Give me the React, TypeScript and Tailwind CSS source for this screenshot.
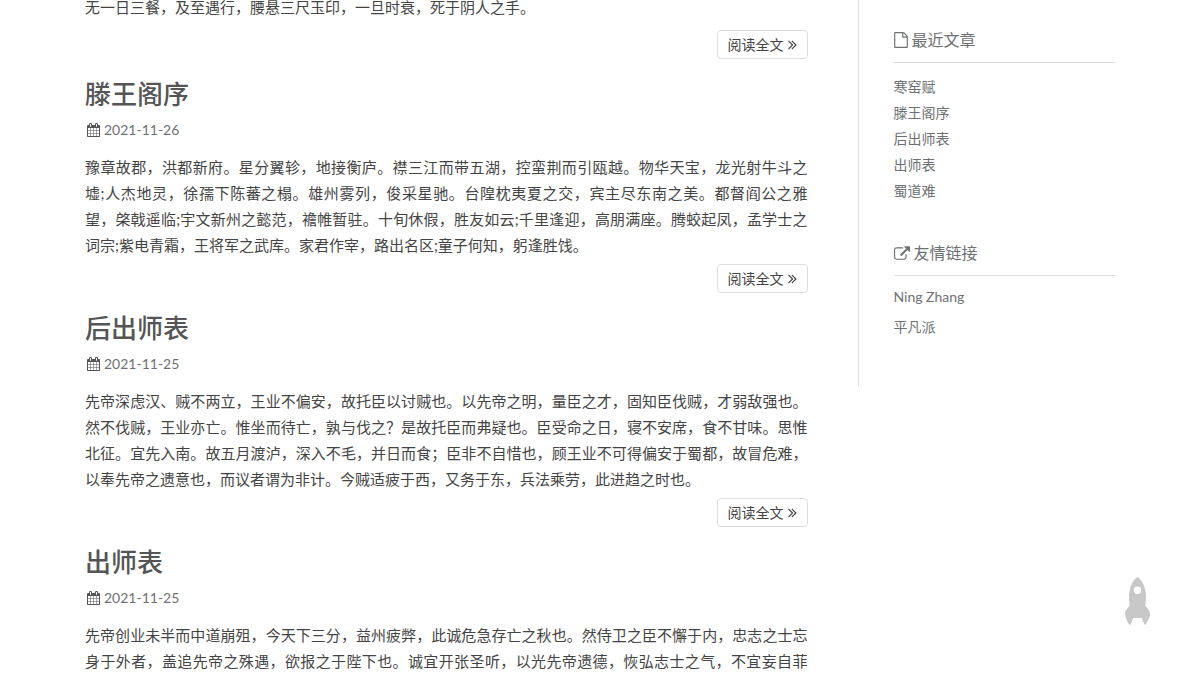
import React from "react";

const CALENDAR =
  "M192 1664h288v-288h-288v288zm352 0h320v-288h-320v288zm-352-352h288v-320h-288v320zm352 0h320v-320h-320v320zm-352-384h288v-288h-288v288zm736 736h320v-288h-320v288zm-384-736h320v-288h-320v288zm768 736h288v-288h-288v288zm-384-352h320v-320h-320v320zm-352-864v-288q0-13-9.5-22.5t-22.5-9.5h-64q-13 0-22.5 9.5t-9.5 22.5v288q0 13 9.5 22.5t22.5 9.5h64q13 0 22.5-9.5t9.5-22.5zm736 864h288v-320h-288v320zm-384-384h320v-288h-320v288zm384 0h288v-288h-288v288zm32-480v-288q0-13-9.5-22.5t-22.5-9.5h-64q-13 0-22.5 9.5t-9.5 22.5v288q0 13 9.5 22.5t22.5 9.5h64q13 0 22.5-9.5t9.5-22.5zm384-64v1280q0 52-38 90t-90 38h-1408q-52 0-90-38t-38-90v-1280q0-52 38-90t90-38h128v-96q0-66 47-113t113-47h64q66 0 113 47t47 113v96h384v-96q0-66 47-113t113-47h64q66 0 113 47t47 113v96h128q52 0 90 38t38 90z";
const FILE =
  "M1596 380q28 28 48 76t20 88v1152q0 40-28 68t-68 28h-1344q-40 0-68-28t-28-68v-1600q0-40 28-68t68-28h896q40 0 88 20t76 48zm-444-244v376h376q-10-29-22-41l-313-313q-12-12-41-22zm384 1528v-1024h-416q-40 0-68-28t-28-68v-416h-768v1536h1280z";
const EXTERNAL =
  "M1408 928v320q0 119-84.5 203.5t-203.5 84.5h-832q-119 0-203.5-84.5t-84.5-203.5v-832q0-119 84.5-203.5t203.5-84.5h704q14 0 23 9t9 23v64q0 14-9 23t-23 9h-704q-66 0-113 47t-47 113v832q0 66 47 113t113 47h832q66 0 113-47t47-113v-320q0-14 9-23t23-9h64q14 0 23 9t9 23zm384-864v512q0 26-19 45t-45 19-45-19l-176-176-652 652q-10 10-23 10t-23-10l-114-114q-10-10-10-23t10-23l652-652-176-176q-19-19-19-45t19-45 45-19h512q26 0 45 19t19 45z";
const DOUBLE_RIGHT =
  "M979 960q0 13-10 23l-466 466q-10 10-23 10t-23-10l-50-50q-10-10-10-23t10-23l393-393-393-393q-10-10-10-23t10-23l50-50q10-10 23-10t23 10l466 466q10 10 10 23zm384 0q0 13-10 23l-466 466q-10 10-23 10t-23-10l-50-50q-10-10-10-23t10-23l393-393-393-393q-10-10-10-23t10-23l50-50q10-10 23-10t23 10l466 466q10 10 10 23z";

function Glyph({ d, viewBox, className }: { d: string; viewBox: string; className: string }) {
  return (
    <svg viewBox={viewBox} className={className} fill="currentColor" aria-hidden="true">
      <path d={d} />
    </svg>
  );
}

const posts = [
  {
    title: "滕王阁序",
    date: "2021-11-26",
    text: "豫章故郡，洪都新府。星分翼轸，地接衡庐。襟三江而带五湖，控蛮荆而引瓯越。物华天宝，龙光射牛斗之墟;人杰地灵，徐孺下陈蕃之榻。雄州雾列，俊采星驰。台隍枕夷夏之交，宾主尽东南之美。都督阎公之雅望，棨戟遥临;宇文新州之懿范，襜帷暂驻。十旬休假，胜友如云;千里逢迎，高朋满座。腾蛟起凤，孟学士之词宗;紫电青霜，王将军之武库。家君作宰，路出名区;童子何知，躬逢胜饯。",
  },
  {
    title: "后出师表",
    date: "2021-11-25",
    text: "先帝深虑汉、贼不两立，王业不偏安，故托臣以讨贼也。以先帝之明，量臣之才，固知臣伐贼，才弱敌强也。然不伐贼，王业亦亡。惟坐而待亡，孰与伐之？是故托臣而弗疑也。臣受命之日，寝不安席，食不甘味。思惟北征。宜先入南。故五月渡泸，深入不毛，并日而食；臣非不自惜也，顾王业不可得偏安于蜀都，故冒危难，以奉先帝之遗意也，而议者谓为非计。今贼适疲于西，又务于东，兵法乘劳，此进趋之时也。",
  },
  {
    title: "出师表",
    date: "2021-11-25",
    text: "先帝创业未半而中道崩殂，今天下三分，益州疲弊，此诚危急存亡之秋也。然侍卫之臣不懈于内，忠志之士忘身于外者，盖追先帝之殊遇，欲报之于陛下也。诚宜开张圣听，以光先帝遗德，恢弘志士之气，不宜妄自菲薄，引喻失义，以塞忠谏之路也。",
  },
];

const recent = ["寒窑赋", "滕王阁序", "后出师表", "出师表", "蜀道难"];
const friends = ["Ning Zhang", "平凡派"];

function ReadMore() {
  return (
    <a
      href="#"
      className="flex h-[29px] items-center gap-1 rounded border border-[#ddd] px-2.5 text-sm text-[#444]"
    >
      阅读全文
      <Glyph d={DOUBLE_RIGHT} viewBox="384 400 1024 1120" className="h-2.5 w-[9px]" />
    </a>
  );
}

function Post({ title, date, text }: { title: string; date: string; text: string }) {
  return (
    <article className="mb-4">
      <h2 className="text-[26px] leading-[38px] font-medium text-[#555]">
        <a href="#">{title}</a>
      </h2>
      <div className="mt-[5px] flex h-6 items-center gap-1 pl-0.5 text-sm text-[#6e7173]">
        <Glyph d={CALENDAR} viewBox="64 0 1664 1792" className="h-3.5 w-[13px] text-[#555]" />
        <time>{date}</time>
      </div>
      <p className="mt-3 text-justify text-[15px] leading-[26px] text-[#444]">{text}</p>
      <div className="mt-1.5 flex justify-end">
        <ReadMore />
      </div>
    </article>
  );
}

export default function App() {
  return (
    <div className="h-screen overflow-hidden bg-white font-['Lato','Noto_Sans_CJK_SC',sans-serif]">
      <div className="flex items-start px-[85px]">
        <main className="w-3/4 pr-[50px]">
          <article className="-mt-1.5 mb-4">
            <p className="text-[15px] leading-[26px] text-[#444]">
              无一日三餐，及至遇行，腰悬三尺玉印，一旦时衰，死于阴人之手。
            </p>
            <div className="mt-2.5 flex justify-end">
              <ReadMore />
            </div>
          </article>
          {posts.map((p) => (
            <Post key={p.title} {...p} />
          ))}
        </main>
        <aside className="w-1/4 border-l border-[#ddd] pt-7 pb-11 pl-[35px] text-[#6e7173]">
          <section>
            <h3 className="flex items-center gap-1 border-b border-[#ddd] pb-2.5 text-base leading-6">
              <Glyph d={FILE} viewBox="128 0 1536 1792" className="h-4 w-3.5" />
              最近文章
            </h3>
            <ul className="mt-[11px] text-sm leading-[26px]">
              {recent.map((r) => (
                <li key={r}>
                  <a href="#">{r}</a>
                </li>
              ))}
            </ul>
          </section>
          <section className="mt-[37px]">
            <h3 className="flex items-center gap-1 border-b border-[#ddd] pb-2.5 text-base leading-6">
              <Glyph d={EXTERNAL} viewBox="0 0 1792 1536" className="h-3.5 w-4" />
              友情链接
            </h3>
            <ul className="mt-1.5 text-sm leading-[30px]">
              {friends.map((f) => (
                <li key={f}>
                  <a href="#">{f}</a>
                </li>
              ))}
            </ul>
          </section>
        </aside>
      </div>
      <button type="button" aria-label="Back to top" className="fixed right-[50px] bottom-[50px] text-[#c8c8c8]">
        <svg viewBox="0 0 25 48" className="block h-12 w-[25px]" fill="currentColor" fillRule="evenodd">
          <path d="M12.5 0C8 2.500 4 11 4 19.500C4 23 4.300 26 4.800 29C2 31 0 34 0 37C0 40 2.500 45 4.500 48C5.800 48 6.500 45 8.200 41H16.800C18.500 45 19.200 48 20.500 48C22.500 45 25 40 25 37C25 34 23 31 20.200 29C20.700 26 21 23 21 19.500C21 11 17 2.500 12.500 0ZM12.500 9.500A3.700 3.700 0 1 1 12.500 16.900A3.700 3.700 0 1 1 12.500 9.500Z" />
        </svg>
      </button>
    </div>
  );
}
